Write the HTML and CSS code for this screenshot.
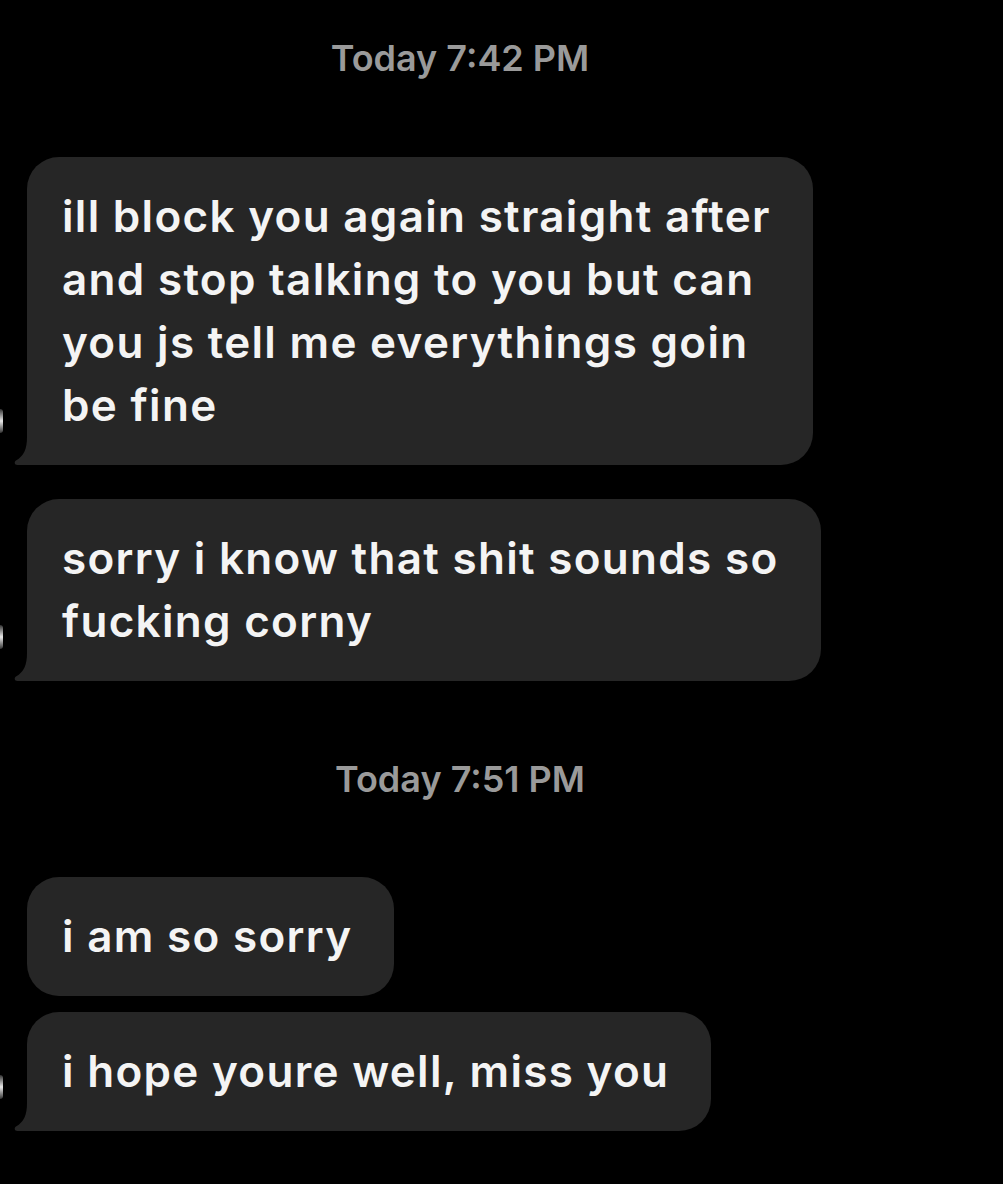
FILE: index.html
```html
<!DOCTYPE html>
<html lang="en">
<head>
    <meta charset="UTF-8">
    <meta name="viewport" content="width=device-width, initial-scale=1.0">
    <title>Messages</title>
    <link rel="stylesheet" href="styles.css">
</head>
<body>
    <div class="thread">
        <div class="stamp stamp-first">Today 7:42 PM</div>

        <div class="group">
            <div class="bubble has-tail">
                ill block you again straight after<br>and stop talking to you but can<br>you js tell me everythings goin<br>be fine
                <span class="avatar-edge"></span>
                <svg class="tail" width="16" height="28" viewBox="0 0 16 28"><path d="M13 0 C13 12 10 19 2 23.5 C0 24.8 0.3 28 3.5 28 L16 28 L16 0 Z"/></svg>
            </div>
            <div class="bubble has-tail">
                sorry i know that shit sounds so<br>fucking corny
                <span class="avatar-edge"></span>
                <svg class="tail" width="16" height="28" viewBox="0 0 16 28"><path d="M13 0 C13 12 10 19 2 23.5 C0 24.8 0.3 28 3.5 28 L16 28 L16 0 Z"/></svg>
            </div>
        </div>

        <div class="stamp">Today 7:51 PM</div>

        <div class="group group-tight">
            <div class="bubble">i am so sorry</div>
            <div class="bubble has-tail">
                i hope youre well, miss you
                <span class="avatar-edge"></span>
                <svg class="tail" width="16" height="28" viewBox="0 0 16 28"><path d="M13 0 C13 12 10 19 2 23.5 C0 24.8 0.3 28 3.5 28 L16 28 L16 0 Z"/></svg>
            </div>
        </div>
    </div>
</body>
</html>
```

FILE: styles.css
```css
body {
    margin: 0;
    background-color: #000;
    font-family: Inter, "Noto Sans", sans-serif;
    color: #f4f4f4;
}

.thread {
    width: 920px;
    padding-top: 36px;
}

.stamp {
    height: 44px;
    line-height: 44px;
    text-align: center;
    font-size: 36px;
    font-weight: 600;
    color: #9a9a9a;
    margin: 76px 0;
}

.stamp-first {
    margin-top: 0;
    margin-bottom: 77px;
}

.group {
    display: flex;
    flex-direction: column;
    align-items: flex-start;
    gap: 34px;
    padding-left: 27px;
}

.group-tight {
    gap: 16px;
}

/* lines are broken by hand, so the bubble just hugs its text */
.bubble {
    position: relative;
    padding: 28px 42px 28px 35px;
    background-color: #262626;
    border-radius: 32px;
    font-size: 44px;
    font-weight: 600;
    line-height: 63px;
    letter-spacing: 1.3px;
    white-space: nowrap;
}

.has-tail {
    border-bottom-left-radius: 0;
}

/* little hook under the bubble's bottom-left corner */
.tail {
    position: absolute;
    left: -13px;
    bottom: 0;
    fill: #262626;
}

/* sliver of the sender's avatar, mostly off screen */
.avatar-edge {
    position: absolute;
    left: -27px;
    bottom: 32px;
    width: 3px;
    height: 24px;
    border-radius: 0 3px 3px 0;
    background: linear-gradient(to bottom, rgba(255,255,255,0.2), #e8e8e8 50%, rgba(255,255,255,0.2));
}
```
